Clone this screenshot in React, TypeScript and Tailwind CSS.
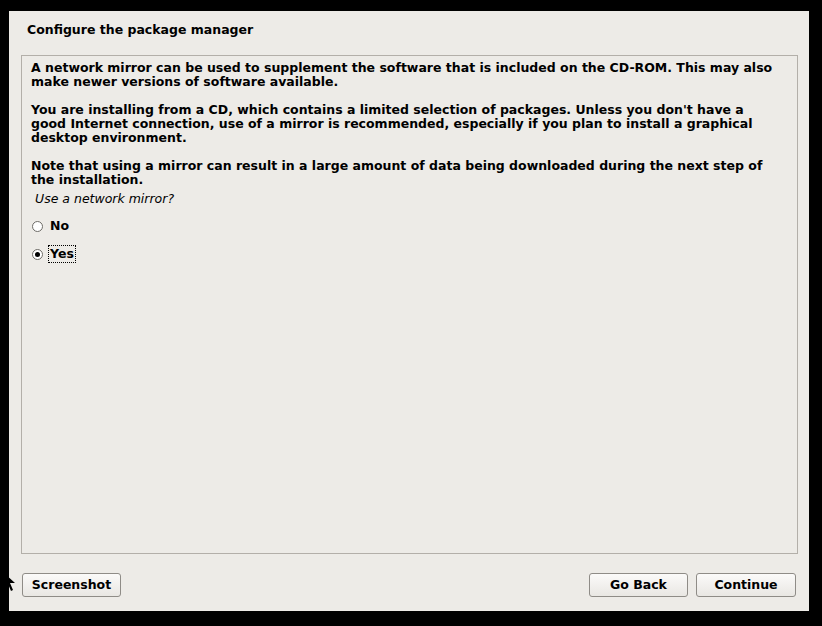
import React from "react";

const font = { fontFamily: '"DejaVu Sans", "Liberation Sans", sans-serif' };

function Radio({ checked }: { checked?: boolean }) {
  return (
    <span className="relative inline-flex h-[11px] w-[11px] items-center justify-center rounded-full border border-[#6e6c68] bg-white">
      {checked && <span className="h-[5px] w-[5px] rounded-full bg-black" />}
    </span>
  );
}

function Btn({ label, w }: { label: string; w: string }) {
  return (
    <button
      className={`${w} h-[24px] rounded-[3px] border border-[#8f8c87] bg-gradient-to-b from-[#fbfaf9] to-[#e9e7e3] text-[12.5px] font-bold leading-none text-black`}
      style={font}
    >
      {label}
    </button>
  );
}

export default function App() {
  return (
    <div className="relative h-[626px] w-[822px] overflow-hidden bg-black pl-[9px] pt-[11px]" style={font}>
      <div className="flex h-[600px] w-[800px] flex-col bg-[#edebe7] text-black">
        <div className="pl-[18px] pt-[12px] text-[12.5px] font-bold leading-[14px]">
          Configure the package manager
        </div>
        <div className="ml-[12px] mt-[18px] h-[499px] w-[777px] border border-[#b3afa9] pl-[9px] pr-[18px] pt-[5px] text-[12.5px] font-bold leading-[14px]">
          <p>
            A network mirror can be used to supplement the software that is included on the CD-ROM. This may also
            make newer versions of software available.
          </p>
          <p className="mt-[14px]">
            You are installing from a CD, which contains a limited selection of packages. Unless you don't have a
            good Internet connection, use of a mirror is recommended, especially if you plan to install a graphical
            desktop environment.
          </p>
          <p className="mt-[14px]">
            Note that using a mirror can result in a large amount of data being downloaded during the next step of
            the installation.
          </p>
          <p className="mt-[5px] pl-[4px] font-normal italic">Use a network mirror?</p>
          <div className="mt-[11px] flex items-center gap-[5px] pl-[1px]">
            <Radio />
            <span className="px-[1px] py-[1px] border border-transparent">No</span>
          </div>
          <div className="mt-[10px] flex items-center gap-[5px] pl-[1px]">
            <Radio checked />
            <span className="border border-dotted border-black px-[1px] py-[1px]">Yes</span>
          </div>
        </div>
        <div className="mt-[19px] flex items-center px-[13px]">
          <Btn label="Screenshot" w="w-[99px]" />
          <div className="flex-1" />
          <Btn label="Go Back" w="w-[99px]" />
          <div className="w-[8px]" />
          <Btn label="Continue" w="w-[100px]" />
        </div>
      </div>
      <svg className="absolute left-[3px] top-[572px]" width="16" height="22" viewBox="0 0 16 22">
        <path d="M1 1 L1 16 L5 12 L8 19 L10 18 L7 11 L12 11 Z" fill="black" />
      </svg>
    </div>
  );
}
